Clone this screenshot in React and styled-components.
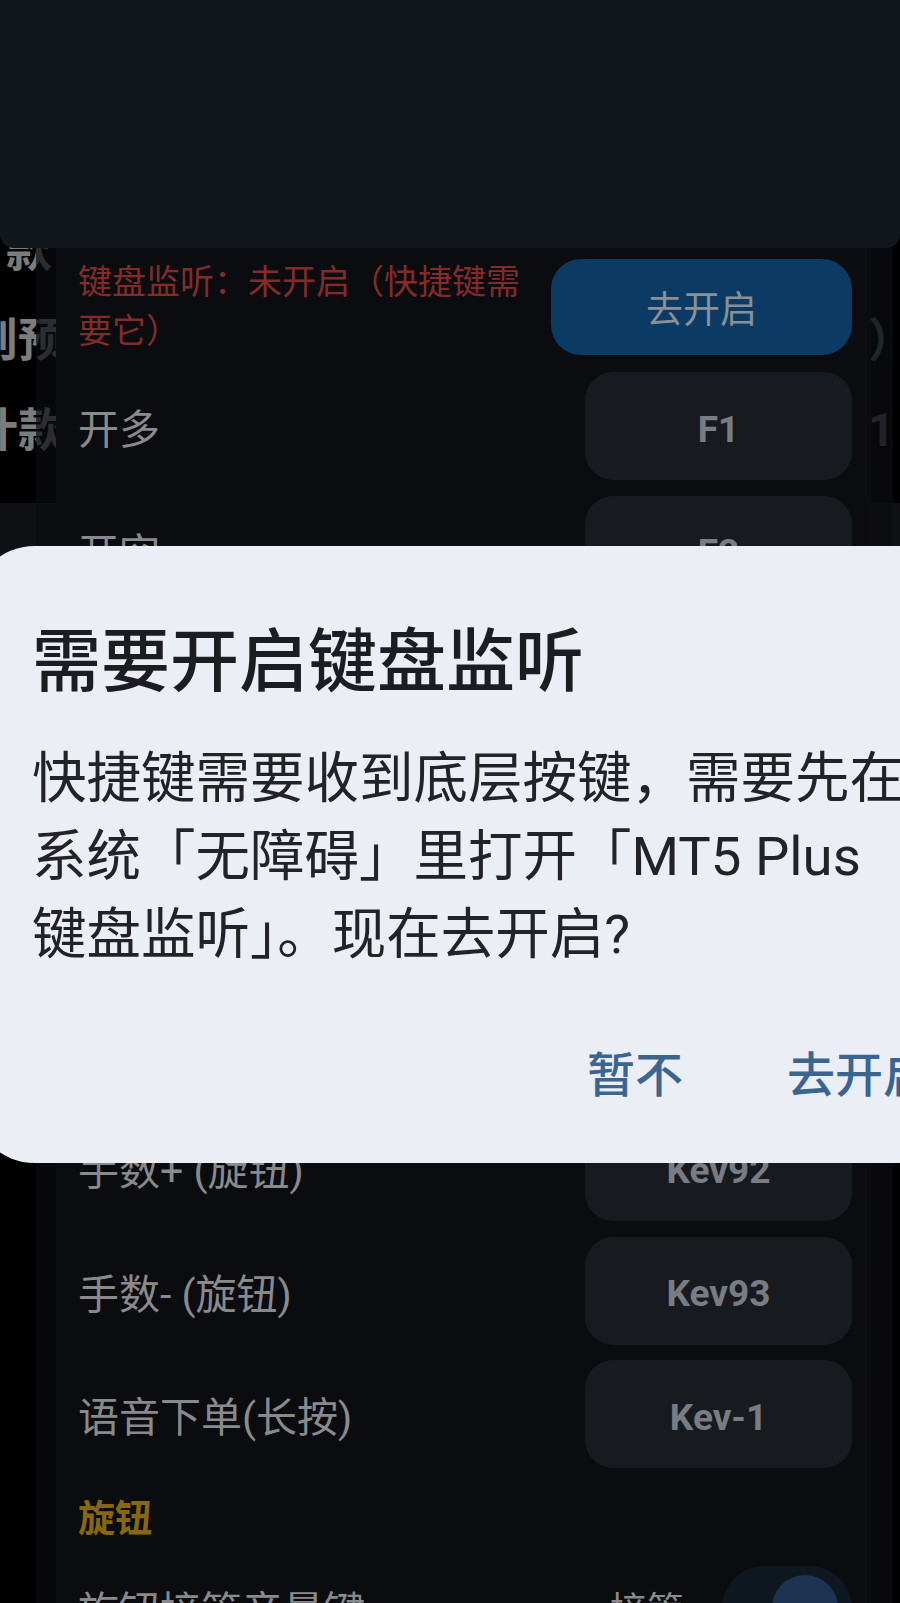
import React from "react";
import styled, { createGlobalStyle } from "styled-components";

const GlobalStyle = createGlobalStyle`
  html, body {
    margin: 0;
    padding: 0;
    background: #000;
  }
  body {
    font-family: Roboto, "Noto Sans CJK SC", sans-serif;
  }
  * {
    box-sizing: border-box;
  }
`;

const Screen = styled.div`
  position: relative;
  width: 900px;
  height: 1603px;
  overflow: hidden;
  background: #000;
`;

/* page that sits under the sheet */
const BackPage = styled.div`
  padding-top: 205px;
  display: flex;
  flex-direction: column;
`;

const BackRow = styled.div`
  height: 90px;
  display: flex;
  align-items: center;
  justify-content: space-between;
`;

const BackClip = styled.div`
  width: ${(p) => p.$w}px;
  overflow: hidden;
  display: flex;
  justify-content: ${(p) => (p.$right ? "flex-start" : "flex-end")};
  white-space: nowrap;
  font-size: 46px;
  font-weight: 700;
  color: #7c7c7c;
  line-height: 90px;
`;

const BackBand = styled.div`
  margin-top: 28px;
  height: 620px;
  background: #0f1114;
`;

const Sheet = styled.div`
  position: absolute;
  top: 0;
  bottom: 0;
  left: 36px;
  right: 7px;
  border-left: 20px solid rgba(10, 12, 16, 0.7);
  border-right: 22px solid rgba(10, 12, 16, 0.78);
  background: #0a0c10;
  background-clip: padding-box;
  padding: 258px 19px 0 22px;
`;

const StatusRow = styled.div`
  display: flex;
  align-items: center;
  gap: 24px;
  margin-bottom: 16px;
`;

const StatusText = styled.div`
  flex: 1;
  font-size: 34px;
  line-height: 49px;
  color: #842b2a;
`;

const EnableButton = styled.div`
  width: 301px;
  height: 96px;
  border-radius: 30px;
  background: #0b3a64;
  color: #8b9097;
  font-size: 37px;
  display: flex;
  align-items: center;
  justify-content: center;
`;

const KeyList = styled.div`
  display: flex;
  flex-direction: column;
  gap: 15.5px;
`;

const KeyRow = styled.div`
  height: 108px;
  display: flex;
  align-items: center;
  justify-content: space-between;
`;

const Label = styled.div`
  font-size: 41px;
  color: #8a8a8c;
`;

const KeyButton = styled.div`
  width: 267px;
  height: 108px;
  padding-top: 6px;
  border-radius: 28px;
  background: #171b20;
  color: #797d83;
  font-size: 37px;
  font-weight: 700;
  display: flex;
  align-items: center;
  justify-content: center;
`;

const SectionTitle = styled.div`
  margin-top: 27px;
  font-size: 37px;
  line-height: 50px;
  font-weight: 700;
  color: #88670f;
`;

const ToggleRow = styled.div`
  margin-top: 23px;
  height: 80px;
  display: flex;
  align-items: center;
  justify-content: space-between;
`;

const ToggleSide = styled.div`
  display: flex;
  align-items: center;
  gap: 38px;
  font-size: 37px;
  color: #8a8a8c;
`;

const Track = styled.div`
  position: relative;
  width: 130px;
  height: 84px;
  border-radius: 42px;
  background: #0f1720;
`;

const Thumb = styled.div`
  position: absolute;
  top: 9px;
  right: 14px;
  width: 66px;
  height: 66px;
  border-radius: 50%;
  background: #1c3452;
`;

const TopBar = styled.div`
  position: absolute;
  top: 0;
  left: 0;
  right: 0;
  height: 248px;
  background: #12161d;
  border-radius: 0 0 14px 14px;
`;

const DialogCard = styled.div`
  position: absolute;
  left: -29px;
  top: 546px;
  width: 1018px;
  height: 617px;
  background: #eceef5;
  border-radius: 64px;
  padding: 77px 65px 0 61px;
`;

const DialogTitle = styled.h2`
  margin: 0;
  font-size: 69px;
  line-height: 80px;
  font-weight: 500;
  color: #1c1d21;
`;

const DialogBody = styled.p`
  margin: 36px 0 0;
  width: 888px;
  font-size: 54.5px;
  line-height: 78px;
  color: #222327;
`;

const Actions = styled.div`
  display: flex;
  justify-content: flex-end;
  gap: 56px;
  margin-top: 58px;
  margin-right: -31px;
`;

const ActionButton = styled.button`
  border: none;
  background: none;
  padding: 0 24px;
  height: 80px;
  font-family: inherit;
  font-size: 48px;
  font-weight: 500;
  color: #3a6591;
`;

const keys = [
  ["开多", "F1"],
  ["开空", "F2"],
  ["平多", "F3"],
  ["平空", "F4"],
  ["全部平仓", "F5"],
  ["撤单", "F6"],
  ["手数+ (旋钮)", "Kev92"],
  ["手数- (旋钮)", "Kev93"],
  ["语音下单(长按)", "Kev-1"],
];

export default function App() {
  return (
    <>
      <GlobalStyle />
      <Screen>
        <BackPage>
          <BackRow>
            <BackClip $w={52}>款</BackClip>
          </BackRow>
          <BackRow>
            <BackClip $w={64}>则预</BackClip>
            <BackClip $w={32} $right>
              ）设
            </BackClip>
          </BackRow>
          <BackRow>
            <BackClip $w={64}>计款</BackClip>
            <BackClip $w={32} $right>
              1 款
            </BackClip>
          </BackRow>
          <BackBand />
        </BackPage>

        <Sheet>
          <StatusRow>
            <StatusText>键盘监听：未开启（快捷键需要它）</StatusText>
            <EnableButton>去开启</EnableButton>
          </StatusRow>
          <KeyList>
            {keys.map(([name, key]) => (
              <KeyRow key={name}>
                <Label>{name}</Label>
                <KeyButton>{key}</KeyButton>
              </KeyRow>
            ))}
          </KeyList>
          <SectionTitle>旋钮</SectionTitle>
          <ToggleRow>
            <Label>旋钮接管音量键</Label>
            <ToggleSide>
              接管
              <Track>
                <Thumb />
              </Track>
            </ToggleSide>
          </ToggleRow>
        </Sheet>

        <TopBar />

        <DialogCard>
          <DialogTitle>需要开启键盘监听</DialogTitle>
          <DialogBody>
            快捷键需要收到底层按键，需要先在系统「无障碍」里打开「MT5 Plus
            键盘监听」。现在去开启?
          </DialogBody>
          <Actions>
            <ActionButton>暂不</ActionButton>
            <ActionButton>去开启</ActionButton>
          </Actions>
        </DialogCard>
      </Screen>
    </>
  );
}
